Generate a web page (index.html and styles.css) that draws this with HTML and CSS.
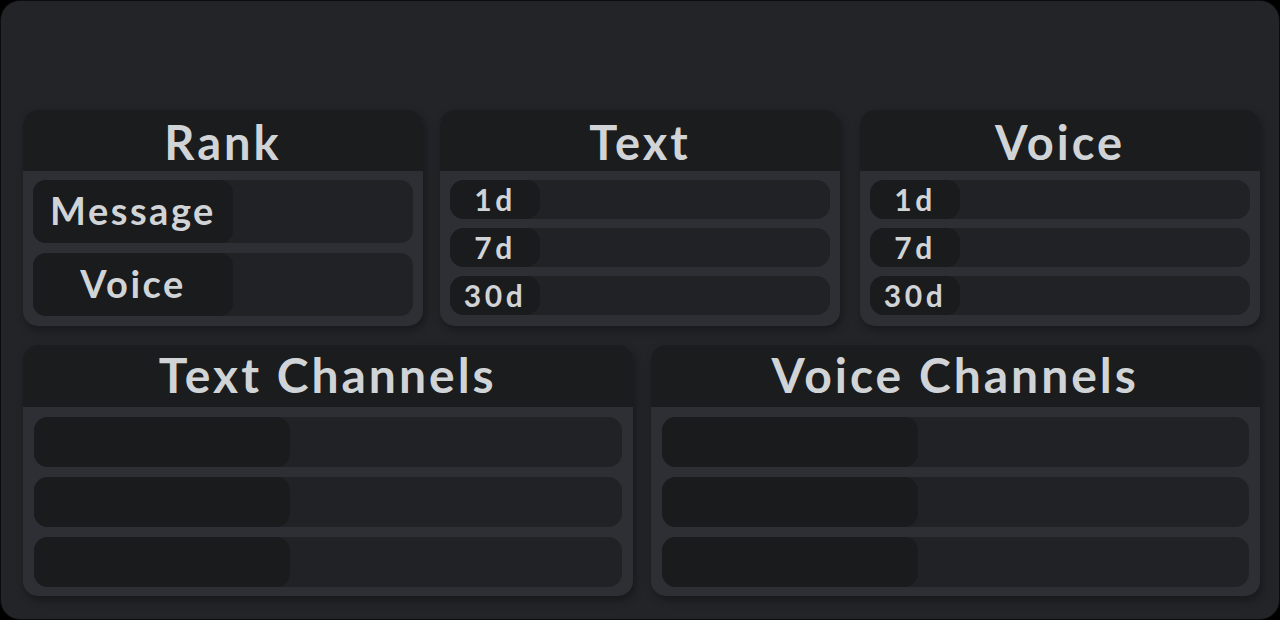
FILE: index.html
```html
<!DOCTYPE html>
<html>
<head>
<meta charset="utf-8">
<link rel="stylesheet" href="styles.css">
</head>
<body>
<div class="frame">
  <div class="top-row">
    <section class="card">
      <h2 class="card-title">Rank</h2>
      <div class="card-body rank-body">
        <div class="row row-rank"><span class="pill pill-rank">Message</span></div>
        <div class="row row-rank"><span class="pill pill-rank">Voice</span></div>
      </div>
    </section>
    <section class="card">
      <h2 class="card-title">Text</h2>
      <div class="card-body period-body">
        <div class="row row-period"><span class="pill pill-period">1d</span></div>
        <div class="row row-period"><span class="pill pill-period">7d</span></div>
        <div class="row row-period"><span class="pill pill-period">30d</span></div>
      </div>
    </section>
    <section class="card card-last">
      <h2 class="card-title">Voice</h2>
      <div class="card-body period-body">
        <div class="row row-period"><span class="pill pill-period">1d</span></div>
        <div class="row row-period"><span class="pill pill-period">7d</span></div>
        <div class="row row-period"><span class="pill pill-period">30d</span></div>
      </div>
    </section>
  </div>
  <div class="bottom-row">
    <section class="card">
      <h2 class="card-title card-title-lg">Text Channels</h2>
      <div class="card-body channel-body">
        <div class="row row-channel"><span class="pill pill-channel"></span></div>
        <div class="row row-channel"><span class="pill pill-channel"></span></div>
        <div class="row row-channel"><span class="pill pill-channel"></span></div>
      </div>
    </section>
    <section class="card">
      <h2 class="card-title card-title-lg">Voice Channels</h2>
      <div class="card-body channel-body">
        <div class="row row-channel"><span class="pill pill-channel"></span></div>
        <div class="row row-channel"><span class="pill pill-channel"></span></div>
        <div class="row row-channel"><span class="pill pill-channel"></span></div>
      </div>
    </section>
  </div>
</div>
</body>
</html>
```

FILE: styles.css
```css
* { box-sizing: border-box; }

html, body {
  margin: 0;
  padding: 0;
  background: #000000;
}

body {
  font-family: "Lato", "Noto Sans", sans-serif;
  color: #d1d4d7;
}

.frame {
  width: 1280px;
  height: 620px;
  background: #232428;
  border: 1px solid #0c0c0e;
  border-radius: 20px;
  padding: 109px 19px 0 22px;
  display: flex;
  flex-direction: column;
  gap: 19px;
}

.top-row {
  display: flex;
  gap: 17px;
}

.top-row .card {
  flex: 0 0 400px;
}

.top-row .card-last {
  margin-left: auto;
}

.bottom-row {
  display: grid;
  grid-template-columns: 1fr 1fr;
  gap: 18px;
}

.card {
  border-radius: 15px;
  overflow: hidden;
  background: #2e2f34;
  box-shadow: 2px 4px 8px rgba(0, 0, 0, 0.35);
  display: flex;
  flex-direction: column;
}

.card-title {
  margin: 0;
  height: 61px;
  background: #1b1c1e;
  font-size: 47px;
  font-weight: 700;
  letter-spacing: 3px;
  text-align: center;
  line-height: 64px;
  overflow: hidden;
}

.card-title-lg {
  height: 62px;
  font-size: 48px;
  letter-spacing: 3px;
  line-height: 60px;
}

.card-body {
  display: flex;
  flex-direction: column;
}

.rank-body {
  padding: 9px 10px 10px;
  gap: 10px;
}

.period-body {
  padding: 9px 10px 10px;
  gap: 9px;
}

.channel-body {
  padding: 10px 11px 9px;
  gap: 10px;
}

.row {
  background: #212226;
  display: flex;
}

.row-rank {
  height: 63px;
  border-radius: 13px;
}

.row-period {
  height: 39px;
  border-radius: 14px;
}

.row-channel {
  height: 50px;
  border-radius: 14px;
}

.pill {
  background: #1a1b1d;
  display: flex;
  align-items: center;
  justify-content: center;
  font-weight: 700;
  color: #d1d4d7;
}

.pill-rank {
  width: 200px;
  border-radius: 13px;
  font-size: 38px;
  letter-spacing: 2.5px;
  padding-bottom: 4px;
}

.pill-period {
  width: 90px;
  border-radius: 14px;
  font-size: 30px;
  letter-spacing: 3.5px;
  padding-bottom: 2px;
}

.pill-channel {
  width: 256px;
  border-radius: 14px;
}
```
